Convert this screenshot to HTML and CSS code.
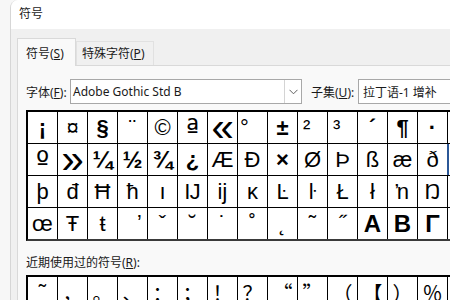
FILE: index.html
```html
<!DOCTYPE html>
<html lang="zh-CN">
<head>
<meta charset="utf-8">
<title>符号</title>
<link rel="stylesheet" href="styles.css">
</head>
<body>
<div class="win">
  <div class="titlebar">符号</div>
  <div class="dlg">
    <div class="tabs">
      <div class="tab active">符号(<u>S</u>)</div>
      <div class="tab">特殊字符(<u>P</u>)</div>
    </div>
    <div class="panel">
      <div class="row">
        <span class="lbl font-lbl">字体(<u>F</u>):</span>
        <div class="combo font-combo">
          <span class="val">Adobe Gothic Std B</span>
          <span class="drop"><svg width="9" height="6" viewBox="0 0 9 6"><path d="M0.5 0.8 L4.5 4.8 L8.5 0.8" fill="none" stroke="#606060" stroke-width="1"/></svg></span>
        </div>
        <span class="lbl sub-lbl">子集(<u>U</u>):</span>
        <div class="combo sub-combo"><span class="val">拉丁语-1 增补</span></div>
      </div>

      <div class="grid">
        <div class="c b">¡</div><div class="c">¤</div><div class="c b">§</div><div class="c">¨</div><div class="c">©</div><div class="c ord">ª</div><div class="c gl">«</div><div class="c l2">°</div><div class="c b">±</div><div class="c l5">²</div><div class="c l5">³</div><div class="c b">´</div><div class="c b">¶</div><div class="c b">·</div><div class="c"></div>
        <div class="c ord">º</div><div class="c gl">»</div><div class="c b fr">¼</div><div class="c b fr">½</div><div class="c b fr">¾</div><div class="c b">¿</div><div class="c">Æ</div><div class="c">Ð</div><div class="c b">×</div><div class="c">Ø</div><div class="c">Þ</div><div class="c">ß</div><div class="c">æ</div><div class="c">ð</div><div class="c sel"></div>
        <div class="c">þ</div><div class="c">đ</div><div class="c">Ħ</div><div class="c">ħ</div><div class="c">ı</div><div class="c">Ĳ</div><div class="c">ĳ</div><div class="c">ĸ</div><div class="c">Ŀ</div><div class="c">ŀ</div><div class="c">Ł</div><div class="c">ł</div><div class="c">ŉ</div><div class="c">Ŋ</div><div class="c"></div>
        <div class="c">œ</div><div class="c">Ŧ</div><div class="c">ŧ</div><div class="c r6">ʼ</div><div class="c">ˇ</div><div class="c">˘</div><div class="c">˙</div><div class="c">˚</div><div class="c">˛</div><div class="c">˜</div><div class="c">˝</div><div class="c g">Α</div><div class="c g">Β</div><div class="c g">Γ</div><div class="c"></div>
      </div>

      <div class="recent-lbl">近期使用过的符号(<u>R</u>):</div>

      <div class="grid recent">
        <div class="c tl">˜</div><div class="c">，</div><div class="c">。</div><div class="c">、</div><div class="c">：</div><div class="c">；</div><div class="c">！</div><div class="c">？</div><div class="c">“</div><div class="c">”</div><div class="c">（</div><div class="c">【</div><div class="c">）</div><div class="c">％</div><div class="c"></div>
      </div>
    </div>
  </div>
</div>
</body>
</html>
```
FILE: styles.css
```css
html, body {
  margin: 0;
  padding: 0;
}

body {
  width: 450px;
  height: 300px;
  overflow: hidden;
  background: #f7f7f7;
  font-family: "Noto Sans", "Noto Sans CJK SC", sans-serif;
  font-size: 12px;
  color: #1a1a1a;
}

u {
  text-decoration: underline;
  text-underline-offset: 1px;
}

.win {
  margin-left: 10px;
  width: 560px;
  height: 300px;
  border-left: 1px solid #d6d6d6;
  border-top-left-radius: 8px;
  background: #f0f0f0;
  overflow: hidden;
}

.titlebar {
  height: 29px;
  line-height: 28px;
  padding-left: 8px;
  background: #ffffff;
}

.dlg {
  padding: 9px 0 0 6px;
}

.tabs {
  display: flex;
  align-items: flex-end;
  height: 27px;
}

.tab {
  box-sizing: border-box;
  line-height: 16px;
  white-space: nowrap;
  border: 1px solid #e1e1e1;
  border-bottom: none;
}

.tab.active {
  position: relative;
  z-index: 1;
  width: 59px;
  height: 28px;
  margin-bottom: -1px;
  padding: 7px 0 0 8px;
  background: #f9f9f9;
  border-color: #d9d9d9;
}

.tab:not(.active) {
  width: 78px;
  height: 24px;
  padding: 4px 0 0 5px;
  background: #f0f0f0;
}

.panel {
  background: #f9f9f9;
  border-top: 1px solid #d9d9d9;
  border-left: 1px solid #d9d9d9;
  padding: 13px 0 0 8px;
  height: 260px;
}

.row {
  display: flex;
  align-items: center;
  height: 25px;
}

.lbl {
  white-space: nowrap;
}

.font-lbl {
  width: 44px;
}

.sub-lbl {
  width: 47px;
  margin-left: 9px;
}

.combo {
  box-sizing: border-box;
  height: 25px;
  display: flex;
  align-items: center;
  background: #ffffff;
  border: 1px solid #a8a8a8;
}

.combo .val {
  flex: 1;
  padding-left: 2px;
  white-space: nowrap;
}

.font-combo {
  width: 232px;
}

.sub-combo {
  width: 160px;
  padding-left: 2px;
}

.drop {
  box-sizing: border-box;
  width: 17px;
  height: 23px;
  border-left: 1px solid #d4d4d4;
  display: flex;
  align-items: center;
  justify-content: center;
}

.grid {
  display: grid;
  grid-template-columns: repeat(15, 29px);
  grid-auto-rows: 31px;
  gap: 1px;
  width: max-content;
  margin-top: 6px;
  background: #000;
  border-top: 2px solid #000;
  border-left: 2px solid #000;
  border-bottom: 2px solid #3a3a3a;
}

.c {
  box-sizing: border-box;
  background: #ffffff;
  text-align: center;
  line-height: 31px;
  font-family: "Liberation Sans", "DejaVu Sans", sans-serif;
  font-size: 22px;
  color: #000;
  overflow: hidden;
  white-space: nowrap;
}

.c.b {
  font-weight: 700;
}

.c.fr {
  font-size: 24px;
}

.c.g {
  font-weight: 700;
  font-size: 24px;
}

.c.gl {
  font-size: 40px;
}

.c.ord {
  font-family: "DejaVu Sans", sans-serif;
  font-size: 28px;
  line-height: 26px;
  padding-top: 5px;
}

.c.l2 {
  text-align: left;
  padding-left: 2px;
}

.c.l5 {
  text-align: left;
  padding-left: 5px;
}

.c.r6 {
  text-align: right;
  padding-right: 5px;
}

.c.sel {
  box-shadow: -1px 0 0 #2b5797, inset 1px 0 0 #2b5797;
}

.recent-lbl {
  margin-top: 14px;
  line-height: 16px;
  height: 16px;
}

.grid.recent {
  margin-top: 4px;
}

.recent .c {
  font-family: "Noto Sans CJK SC", sans-serif;
  font-size: 20px;
  line-height: 31px;
}

.recent .c.tl {
  font-family: "Liberation Sans", sans-serif;
  font-size: 22px;
}
```
